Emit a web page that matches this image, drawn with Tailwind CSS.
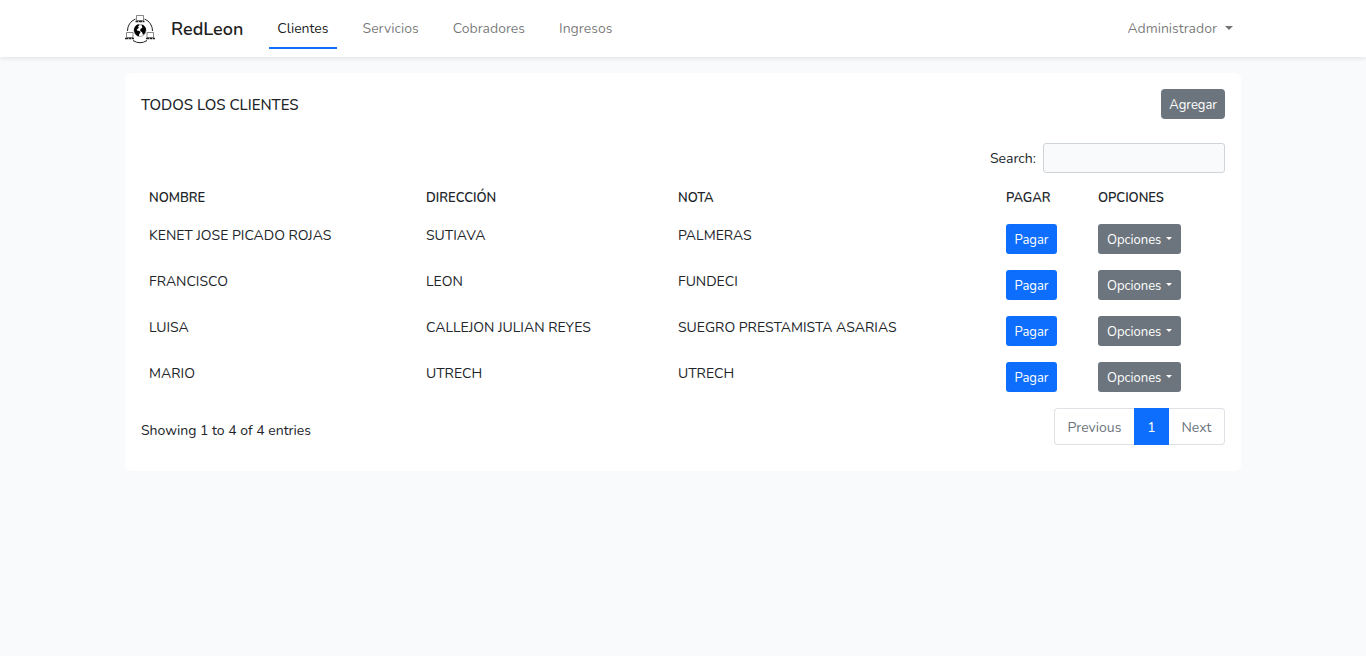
<!DOCTYPE html>
<html lang="es">
<head>
<meta charset="utf-8">
<meta name="viewport" content="width=device-width, initial-scale=1">
<title>RedLeon</title>
<script src="https://cdn.jsdelivr.net/npm/@tailwindcss/browser@4"></script>
</head>
<body class="min-h-screen bg-[#f8fafc] font-[Nunito,Lato,sans-serif] text-[14px] leading-[24px] text-[#212529]">
<header class="relative bg-white shadow-[0_2px_4px_rgba(0,0,0,0.08)]">
  <nav class="mx-auto flex h-[57px] max-w-[1140px] items-center px-3">
    <a href="#" class="flex items-center gap-4 text-lg font-semibold text-black/90">
      <svg class="size-[30px]" viewBox="0 0 30 30" fill="none" stroke="#222" aria-hidden="true">
        <path d="M10.500 5A12.500 12.500 0 0 0 2.500 17M19.500 5A12.500 12.500 0 0 1 27.500 17M8 26.500Q15 31 22 26.500" stroke-width="1"/>
        <g stroke-width="0.700" stroke="#555">
          <path fill="#fff" d="M11.500 1.500h7v5h-7zM1.500 18.500h6.500v5H1.500zM22 18.500h6.500v5H22z"/>
        </g>
        <path d="M10.500 7.500h9M0 24.500h9M21 24.500h9" stroke-width="1.500" stroke-dasharray="3 0.500"/>
        <circle cx="15" cy="16.500" r="6" stroke="#555" stroke-width="0.500"/>
        <path fill="#000" stroke="none" d="M9 15.500c.3-2.500 1.800-4.500 4.200-5.200l1.300.9-1.600 1.500 1 1-2.100 1.700.2 1.200 2.500.5 1 1.600-1.300 1.300-.2 2.300c-3-.6-5-3.200-5-6.800zM16.500 10.500l2 .8c1.500 1.200 2.500 2.800 2.500 4.700l-1 3.300-2 1.700-1-3-1.800-.8.200-2.200 1.900-1.200z"/>
      </svg>
      RedLeon
    </a>
    <div class="ml-[26px] flex gap-[18px]">
      <a href="#" class="border-b-2 border-[#0d6efd] px-2 pt-[9px] pb-[6px] text-black/90">Clientes</a>
      <a href="#" class="border-b-2 border-transparent px-2 pt-[9px] pb-[6px] text-black/55">Servicios</a>
      <a href="#" class="border-b-2 border-transparent px-2 pt-[9px] pb-[6px] text-black/55">Cobradores</a>
      <a href="#" class="border-b-2 border-transparent px-2 pt-[9px] pb-[6px] text-black/55">Ingresos</a>
    </div>
    <button type="button" class="ml-auto flex items-center gap-2 px-2 pt-[9px] pb-2 text-black/55">Administrador
      <svg class="mb-0.5 h-1 w-2" viewBox="0 0 8 4" fill="currentColor" aria-hidden="true"><path d="M0 0h8L4 4z"/></svg>
    </button>
  </nav>
</header>
<main class="mx-auto max-w-[1140px] px-3 pt-4">
  <section class="rounded-md bg-white p-4 pb-[26px]">
    <div class="flex items-center justify-between">
      <h1 class="pt-px text-[15px] font-medium">TODOS LOS CLIENTES</h1>
      <button type="button" class="h-[30px] rounded bg-[#6c757d] px-2 pt-0.5 text-[13px] text-white">Agregar</button>
    </div>
    <div class="mt-6 flex items-center justify-end gap-[7px]">
      <label for="search" class="pt-0.5">Search:</label>
      <input id="search" type="search" class="h-[30px] w-[182px] rounded-[3px] border border-[#ced4da] bg-[#f8fafc] px-2">
    </div>
    <table class="mt-2 w-full table-fixed text-left">
      <colgroup><col class="w-[277px]"><col class="w-[252px]"><col class="w-[328px]"><col class="w-[92px]"><col class="w-[135px]"></colgroup>
      <thead>
        <tr class="h-[35px] align-top text-[13px] leading-[34px]">
          <th class="px-2 font-semibold">NOMBRE</th>
          <th class="px-2 font-semibold">DIRECCIÓN</th>
          <th class="px-2 font-semibold">NOTA</th>
          <th class="px-2 font-semibold">PAGAR</th>
          <th class="px-2 font-semibold">OPCIONES</th>
        </tr>
      </thead>
      <tbody class="align-top">
        <tr>
          <td class="p-2">KENET JOSE PICADO ROJAS</td><td class="p-2">SUTIAVA</td><td class="p-2">PALMERAS</td>
          <td class="p-2"><button type="button" class="block h-[30px] w-[51px] rounded-[3px] bg-[#0d6efd] pt-px text-[13px] text-white">Pagar</button></td>
          <td class="p-2"><button type="button" class="flex h-[30px] w-[83px] items-center justify-between rounded-[3px] bg-[#6c757d] px-[9px] pt-px text-[13px] text-white">Opciones<svg class="mb-0.5 h-[3px] w-1.5" viewBox="0 0 6 3" fill="currentColor" aria-hidden="true"><path d="M0 0h6L3 3z"/></svg></button></td>
        </tr>
        <tr>
          <td class="p-2">FRANCISCO</td><td class="p-2">LEON</td><td class="p-2">FUNDECI</td>
          <td class="p-2"><button type="button" class="block h-[30px] w-[51px] rounded-[3px] bg-[#0d6efd] pt-px text-[13px] text-white">Pagar</button></td>
          <td class="p-2"><button type="button" class="flex h-[30px] w-[83px] items-center justify-between rounded-[3px] bg-[#6c757d] px-[9px] pt-px text-[13px] text-white">Opciones<svg class="mb-0.5 h-[3px] w-1.5" viewBox="0 0 6 3" fill="currentColor" aria-hidden="true"><path d="M0 0h6L3 3z"/></svg></button></td>
        </tr>
        <tr>
          <td class="p-2">LUISA</td><td class="p-2">CALLEJON JULIAN REYES</td><td class="p-2">SUEGRO PRESTAMISTA ASARIAS</td>
          <td class="p-2"><button type="button" class="block h-[30px] w-[51px] rounded-[3px] bg-[#0d6efd] pt-px text-[13px] text-white">Pagar</button></td>
          <td class="p-2"><button type="button" class="flex h-[30px] w-[83px] items-center justify-between rounded-[3px] bg-[#6c757d] px-[9px] pt-px text-[13px] text-white">Opciones<svg class="mb-0.5 h-[3px] w-1.5" viewBox="0 0 6 3" fill="currentColor" aria-hidden="true"><path d="M0 0h6L3 3z"/></svg></button></td>
        </tr>
        <tr>
          <td class="p-2">MARIO</td><td class="p-2">UTRECH</td><td class="p-2">UTRECH</td>
          <td class="p-2"><button type="button" class="block h-[30px] w-[51px] rounded-[3px] bg-[#0d6efd] pt-px text-[13px] text-white">Pagar</button></td>
          <td class="p-2"><button type="button" class="flex h-[30px] w-[83px] items-center justify-between rounded-[3px] bg-[#6c757d] px-[9px] pt-px text-[13px] text-white">Opciones<svg class="mb-0.5 h-[3px] w-1.5" viewBox="0 0 6 3" fill="currentColor" aria-hidden="true"><path d="M0 0h6L3 3z"/></svg></button></td>
        </tr>
      </tbody>
    </table>
    <div class="mt-2 flex items-start justify-between">
      <p class="pt-[11px]">Showing 1 to 4 of 4 entries</p>
      <div class="flex h-[37px] text-[#6c757d]">
        <button type="button" class="w-20 rounded-l border border-r-0 border-[#dee2e6] pt-0.5">Previous</button>
        <button type="button" class="w-[35px] bg-[#0d6efd] pt-0.5 text-white">1</button>
        <button type="button" class="w-14 rounded-r border border-l-0 border-[#dee2e6] pt-0.5">Next</button>
      </div>
    </div>
  </section>
</main>
</body>
</html>
